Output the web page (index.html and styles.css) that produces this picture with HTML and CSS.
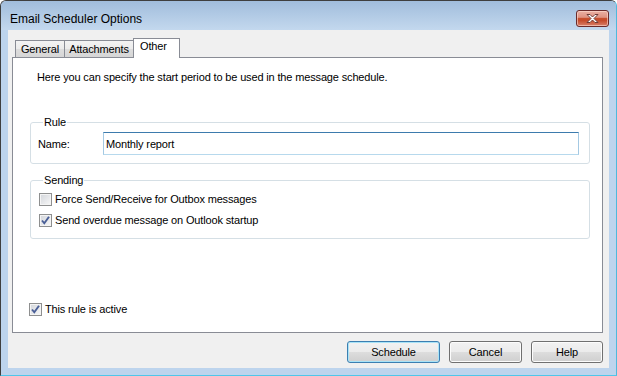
FILE: index.html
```html
<!DOCTYPE html>
<html lang="en">
<head>
    <meta charset="UTF-8">
    <meta name="viewport" content="width=device-width, initial-scale=1.0">
    <title>Email Scheduler Options</title>
    <link rel="stylesheet" href="styles.css">
</head>
<body>
    <div class="window">
        <div class="titlebar">
            <span class="title">Email Scheduler Options</span>
            <button class="close-btn" type="button" aria-label="Close">
                <svg width="15" height="11" viewBox="0 0 15 11">
                    <path d="M2 1.5 L5 1.5 L7.5 4 L10 1.5 L13 1.5 L9 5.5 L13 9.5 L10 9.5 L7.5 7 L5 9.5 L2 9.5 L6 5.5 Z" fill="#fff" stroke="#6e3c38" stroke-width="1" stroke-linejoin="round"/>
                </svg>
            </button>
        </div>
        <div class="client">
            <div class="tabs">
                <div class="tab general">General</div>
                <div class="tab attachments">Attachments</div>
                <div class="tab active">Other</div>
            </div>
            <div class="panel">
                <p class="intro">Here you can specify the start period to be used in the message schedule.</p>

                <fieldset class="group">
                    <legend>Rule</legend>
                    <div class="field-row">
                        <label for="ruleName">Name:</label>
                        <input type="text" id="ruleName" name="ruleName" value="Monthly report">
                    </div>
                </fieldset>

                <fieldset class="group sending">
                    <legend>Sending</legend>
                    <label class="check">
                        <span class="box"></span>
                        Force Send/Receive for Outbox messages
                    </label>
                    <label class="check">
                        <span class="box">
                            <svg width="11" height="11" viewBox="0 0 11 11"><path d="M2 5.5 L4.3 8.3 L9 1.8" fill="none" stroke="#4a5f97" stroke-width="1.9"/></svg>
                        </span>
                        Send overdue message on Outlook startup
                    </label>
                </fieldset>

                <label class="check active-rule">
                    <span class="box">
                        <svg width="11" height="11" viewBox="0 0 11 11"><path d="M2 5.5 L4.3 8.3 L9 1.8" fill="none" stroke="#4a5f97" stroke-width="1.9"/></svg>
                    </span>
                    This rule is active
                </label>
            </div>
            <div class="buttons">
                <button type="button" class="btn default">Schedule</button>
                <button type="button" class="btn cancel">Cancel</button>
                <button type="button" class="btn help">Help</button>
            </div>
        </div>
    </div>
</body>
</html>
```

FILE: styles.css
```css
* {
    box-sizing: border-box;
}

body {
    margin: 0;
    background-color: #ffffff;
    font-family: "Liberation Sans", Arial, sans-serif;
    font-size: 11px;
    letter-spacing: -0.15px;
    color: #000000;
}

.window {
    width: 617px;
    height: 376px;
    display: flex;
    flex-direction: column;
    border: 1px solid #3f3f3f;
    border-right-color: #4fb9dc;
    border-bottom-color: #4fc6ea;
    border-radius: 6px 6px 0 0;
    background-color: #bdd4ed;
    padding: 0 7px 7px 7px;
    overflow: hidden;
}

.titlebar {
    height: 29px;
    margin: 0 -7px;
    padding: 0 7px 0 9px;
    display: flex;
    align-items: flex-start;
    justify-content: space-between;
    background: linear-gradient(#a1bddc, #c3d8ee);
}

.title {
    margin-top: 10px;
    font-size: 12px;
    line-height: 16px;
    letter-spacing: 0;
}

.close-btn {
    width: 33px;
    height: 17px;
    margin-top: 9px;
    padding: 0;
    display: flex;
    align-items: center;
    justify-content: center;
    border: 1px solid #6a2b2b;
    border-radius: 3px;
    background: linear-gradient(#eab0a3 0%, #df9382 42%, #c8502f 50%, #c54a2a 62%, #d8806a 100%);
    box-shadow: inset 0 0 0 1px rgba(255, 220, 210, 0.6);
}

.client {
    flex: 1;
    display: flex;
    flex-direction: column;
    background-color: #f0f0f0;
    padding-top: 8px;
}

.tabs {
    height: 19px;
    margin-left: 7px;
    display: flex;
    align-items: flex-end;
}

.tab {
    height: 17px;
    padding: 0;
    text-align: center;
    line-height: 16px;
    border: 1px solid #898c95;
    border-bottom: none;
    margin-right: -1px;
    background: linear-gradient(#f3f3f3 0%, #ebebeb 50%, #dddddd 50%, #d6d6d6 100%);
}

.tab.general {
    width: 50px;
}

.tab.attachments {
    width: 70px;
}

.tab.active {
    position: relative;
    z-index: 1;
    width: 47px;
    height: 20px;
    margin-bottom: -1px;
    padding-left: 6px;
    text-align: left;
    line-height: 15px;
    background: #ffffff;
}

.panel {
    height: 276px;
    margin: 0 6px 0 4px;
    display: flex;
    flex-direction: column;
    background-color: #ffffff;
    border: 1px solid #898c95;
}

.intro {
    margin: 13px 0 0 24px;
    line-height: 13px;
}

.group {
    margin: 32px 12px 0 17px;
    padding: 0 10px 8px 7px;
    border: 1px solid #d5dfe5;
    border-radius: 3px;
    min-width: 0;
}

.group legend {
    padding: 0 1px;
    margin-left: 5px;
    line-height: 13px;
}

.field-row {
    margin-top: 3px;
    display: flex;
    align-items: center;
}

.field-row label {
    width: 65px;
}

.field-row input {
    flex: 1;
    height: 23px;
    padding: 0 2px;
    font-family: inherit;
    font-size: 11px;
    letter-spacing: -0.15px;
    border: 1px solid #a4c9e3;
    border-top-color: #3d7bad;
    border-bottom-color: #b7d9ed;
    outline: none;
}

.sending {
    margin-top: 10px;
    padding: 6px 10px 11px 8px;
    display: flex;
    flex-direction: column;
    gap: 8px;
}

.sending legend {
    margin-left: 4px;
}

.check {
    display: flex;
    align-items: center;
    gap: 3px;
    line-height: 13px;
}

.box {
    width: 13px;
    height: 13px;
    display: flex;
    align-items: center;
    justify-content: center;
    border: 1px solid #8e8f8f;
    background: linear-gradient(135deg, #d2d5da, #f8f8f8);
    box-shadow: inset 0 0 0 1px #f4f4f4;
}

.active-rule {
    margin: auto 0 16px 16px;
}

.buttons {
    margin: 8px 6px 0 0;
    display: flex;
    justify-content: flex-end;
    gap: 9px;
}

.btn {
    height: 22px;
    padding: 0;
    font-family: inherit;
    font-size: 11px;
    letter-spacing: -0.15px;
    color: #000000;
    border: 1px solid #707070;
    border-radius: 3px;
    background: linear-gradient(#f2f2f2 0%, #ebebeb 50%, #dddddd 50%, #cfcfcf 100%);
    box-shadow: inset 0 0 0 1px #fcfcfc;
}

.btn.default {
    width: 93px;
    border-color: #3c7fb1;
    box-shadow: inset 0 0 0 1px #a9e3f7;
}

.btn.cancel {
    width: 73px;
}

.btn.help {
    width: 72px;
}
```
